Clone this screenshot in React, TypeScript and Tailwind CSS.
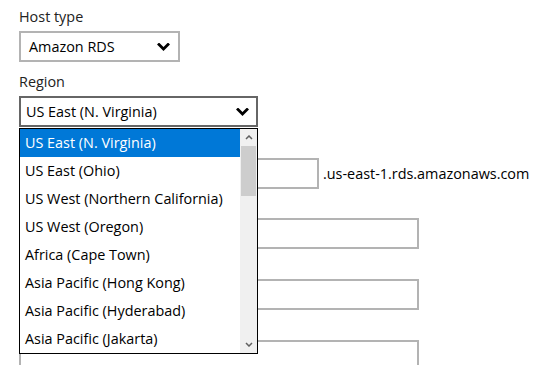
import { useState } from "react";

const regions = [
  "US East (N. Virginia)",
  "US East (Ohio)",
  "US West (Northern California)",
  "US West (Oregon)",
  "Africa (Cape Town)",
  "Asia Pacific (Hong Kong)",
  "Asia Pacific (Hyderabad)",
  "Asia Pacific (Jakarta)",
];

const Chevron = ({ className }: { className?: string }) => (
  <svg viewBox="0 0 12 8" className={className} fill="none">
    <path d="M1.5 1.5 L6 6 L10.5 1.5" stroke="#000" strokeWidth="2.8" strokeLinecap="square" />
  </svg>
);

const SmallArrow = ({ up }: { up?: boolean }) => (
  <svg viewBox="0 0 8 5" className="w-[8px] h-[5px]" fill="none">
    <path
      d={up ? "M1 4 L4 1 L7 4" : "M1 1 L4 4 L7 1"}
      stroke="#606060"
      strokeWidth="1.5"
    />
  </svg>
);

// labels of the fields below sit under the open list, so only their space is kept
const Spacer = ({ className }: { className: string }) => <div className={className} />;

const App = () => {
  const [selected] = useState(0);
  return (
    <div
      className="w-[550px] h-[365px] overflow-hidden bg-white text-[14.4px] text-[#222] px-[19px] pt-[7px]"
      style={{ fontFamily: '"Open Sans", "Noto Sans", sans-serif' }}
    >
      <div className="h-[20px] leading-[20px]">Host type</div>
      <div className="mt-[4px] w-[161px] h-[31px] border-2 border-[#b3b3b3] flex items-center justify-between pl-[8px] pr-[8px] text-black">
        <span>Amazon RDS</span>
        <Chevron className="w-[13px] h-[8px]" />
      </div>

      <div className="mt-[10px] h-[20px] leading-[20px]">Region</div>
      <div className="relative mt-[4px] w-[239px]">
        <div className="h-[31px] border-2 border-[#666] flex items-center justify-between pl-[5px] pr-[7px] text-black">
          <span>{regions[selected]}</span>
          <Chevron className="w-[13px] h-[8px]" />
        </div>
        <div className="absolute left-0 top-[32px] z-10 w-[239px] border border-black bg-white flex">
          <ul className="flex-1">
            {regions.map((r, i) => (
              <li
                key={r}
                className={
                  "h-[28px] leading-[28px] pl-[5px] whitespace-nowrap " +
                  (i === selected ? "bg-[#0078d7] text-white" : "text-black")
                }
              >
                {r}
              </li>
            ))}
          </ul>
          <div className="w-[17px] bg-[#f0f0f0] flex flex-col items-center">
            <div className="h-[17px] flex items-center justify-center">
              <SmallArrow up />
            </div>
            <div className="w-[15px] h-[50px] bg-[#cdcdcd]" />
            <div className="flex-1" />
            <div className="h-[17px] flex items-center justify-center">
              <SmallArrow />
            </div>
          </div>
        </div>
      </div>

      <Spacer className="mt-[7px] h-[20px]" />
      <div className="mt-[4px] flex items-center gap-[4px]">
        <div className="w-[300px] h-[31px] border-2 border-[#b3b3b3]" />
        <span className="text-black">.us-east-1.rds.amazonaws.com</span>
      </div>

      <Spacer className="mt-[5px] h-[20px]" />
      <div className="mt-[4px] w-[400px] h-[31px] border-2 border-[#b3b3b3]" />

      <Spacer className="mt-[6px] h-[20px]" />
      <div className="mt-[4px] w-[400px] h-[31px] border-2 border-[#b3b3b3]" />

      <Spacer className="mt-[6px] h-[20px]" />
      <div className="mt-[4px] w-[400px] h-[31px] border-2 border-[#b3b3b3]" />
    </div>
  );
};

export default App;
